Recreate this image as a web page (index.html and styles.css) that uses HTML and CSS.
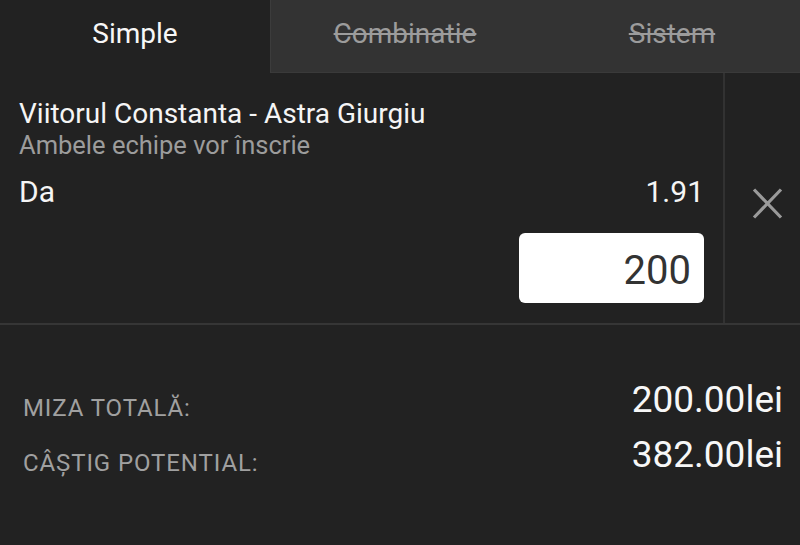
FILE: index.html
```html
<!DOCTYPE html>
<html lang="ro">
<head>
<meta charset="utf-8">
<title>Bilet</title>
<link rel="stylesheet" href="styles.css">
</head>
<body>
<div class="app">
  <div class="tabs">
    <div class="tab tab-active">Simple</div>
    <div class="tabs-rest">
      <div class="tab tab-off">Combinatie</div>
      <div class="tab tab-off tab-last">Sistem</div>
    </div>
  </div>
  <div class="bet">
    <div class="bet-main">
      <div class="match">Viitorul Constanta - Astra Giurgiu</div>
      <div class="market">Ambele echipe vor înscrie</div>
      <div class="sel-row"><span>Da</span><span>1.91</span></div>
      <div class="stake-row"><div class="stake">200</div></div>
    </div>
    <div class="bet-close">
      <svg class="close-icon" width="31" height="33" viewBox="0 0 31 33">
        <path d="M2 2.5 L29 30.5 M29 2.5 L2 30.5" stroke="#9a9a9a" stroke-width="3.2" fill="none"/>
      </svg>
    </div>
  </div>
  <div class="summary">
    <div class="sum-row"><span class="sum-label">MIZA TOTALĂ:</span><span class="sum-value">200.00lei</span></div>
    <div class="sum-row"><span class="sum-label">CÂŞTIG POTENTIAL:</span><span class="sum-value">382.00lei</span></div>
  </div>
</div>
</body>
</html>
```
FILE: styles.css
```css
* { box-sizing: border-box; }
html, body {
  margin: 0;
  padding: 0;
  background: #222222;
}
body {
  font-family: Roboto, "Noto Sans", sans-serif;
  color: #f5f5f5;
  width: 800px;
  height: 545px;
  overflow: hidden;
}
.app {
  display: flex;
  flex-direction: column;
  height: 545px;
}
.tabs {
  display: flex;
  height: 73px;
}
.tab {
  display: flex;
  align-items: center;
  justify-content: center;
  font-size: 28px;
  padding-bottom: 6px;
}
.tab-active {
  width: 270px;
  color: #f7f7f7;
  background: #222222;
}
.tabs-rest {
  flex: 1;
  display: flex;
  padding-left: 6px;
  background: #333333;
  border-left: 1px solid #3c3c3c;
  border-bottom: 1px solid #3a3a3a;
}
.tab-off {
  flex: 1;
  color: #9c9c9c;
  text-decoration: line-through;
  text-decoration-thickness: 2px;
}
.tab-last {
  padding-left: 11px;
}
.bet {
  display: flex;
  height: 252px;
  border-bottom: 2px solid #363636;
}
.bet-main {
  width: 723px;
  padding: 24px 19px 20px 19px;
  display: flex;
  flex-direction: column;
}
.match {
  font-size: 28px;
  color: #f5f5f5;
}
.market {
  font-size: 25.5px;
  color: #9c9c9c;
}
.sel-row {
  display: flex;
  justify-content: space-between;
  font-size: 30px;
  margin-top: 14px;
}
.stake-row {
  display: flex;
  justify-content: flex-end;
  margin-top: 24px;
}
.stake {
  width: 185px;
  height: 70px;
  background: #ffffff;
  border-radius: 6px;
  color: #333333;
  font-size: 40px;
  text-align: right;
  padding: 5px 13px 0 0;
  line-height: 65px;
}
.bet-close {
  flex: 1;
  border-left: 2px solid #323232;
  padding: 114px 0 0 27px;
}
.close-icon {
  display: block;
}
.summary {
  padding: 53px 17px 0 23px;
  display: flex;
  flex-direction: column;
  gap: 11.6px;
}
.sum-row {
  display: flex;
  justify-content: space-between;
  align-items: flex-end;
}
.sum-label {
  font-size: 24px;
  letter-spacing: 0.9px;
  color: #a0a0a0;
  margin-bottom: -1px;
}
.sum-value {
  font-size: 37px;
  color: #f7f7f7;
}
```
